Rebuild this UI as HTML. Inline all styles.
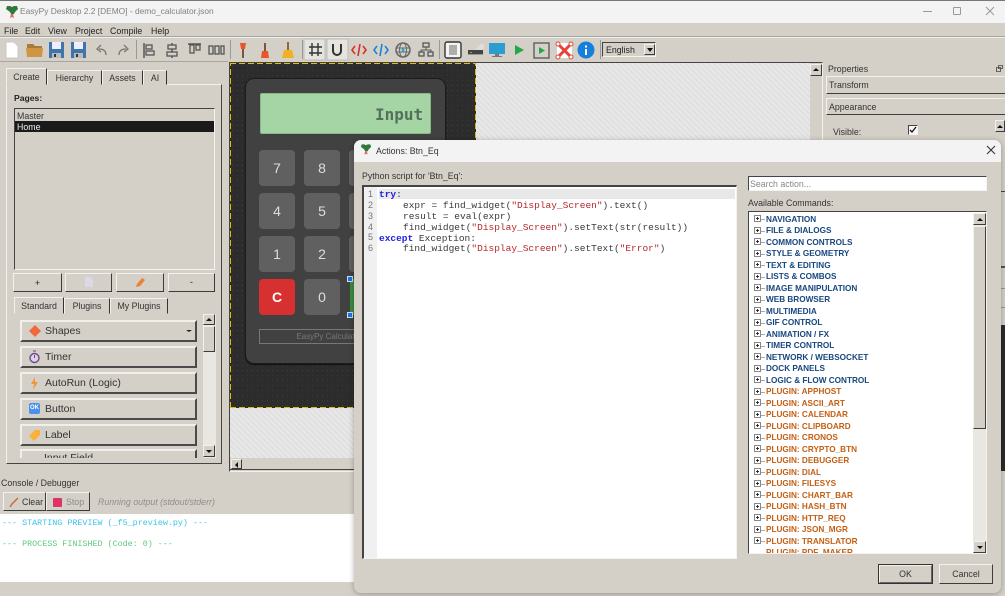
<!DOCTYPE html>
<html><head><meta charset="utf-8"><style>
html,body{margin:0;padding:0;width:1005px;height:596px;overflow:hidden;background:#d4d0c8}
body{position:relative;font-family:"Liberation Sans",sans-serif;font-size:8.8px;color:#222}
div,span.a,svg{position:absolute;box-sizing:border-box}
.t{white-space:nowrap;line-height:12px}
.r{background:#d4d0c8;border:1px solid;border-color:#f2f1ed #3c3c3c #3c3c3c #f2f1ed}
.s{border:1px solid;border-color:#444 #f4f3f0 #f4f3f0 #444}
.wb{background:#d4d0c8;border:2px solid;border-color:#f0efeb #4a4a4a #4a4a4a #f0efeb;font-size:10.5px;color:#333;line-height:19px;padding-left:23px;height:22px;left:20px;width:177px;white-space:nowrap}
.tab{background:#d4d0c8;border:1px solid;border-color:#f2f1ed #333 #d4d0c8 #f2f1ed;text-align:center;color:#333;white-space:nowrap}
.arr{width:0;height:0;border-left:3px solid transparent;border-right:3px solid transparent}
.m{font:9.5px/11px "Liberation Mono",monospace;color:#3a3a3a;white-space:pre;left:379px}
.in{left:403px}
.ln{font:9px/11px "Liberation Sans",sans-serif;color:#777;left:368px}
.kw{color:#1f1fe0;font-weight:bold}.st{color:#b52a2a}
.i{left:766px;font-weight:bold;font-size:8.2px;line-height:11px;white-space:nowrap}
.n{color:#17477f}.p{color:#c45f14}
.pm{left:754px;width:7px;height:7px;border:1px solid #888;background:#fff}
.pm:before{content:"";position:absolute;left:1px;top:2px;width:3px;height:1px;background:#333}
.pm:after{content:"";position:absolute;left:2px;top:1px;width:1px;height:3px;background:#333}
.pl{left:761px;width:4px;height:1px;background:#aaa}
.k{background:#606060;border-radius:4px;width:36px;height:36px;color:#ddd;font-size:14px;line-height:36px;text-align:center}
.dh{height:1px;background:repeating-linear-gradient(90deg,#e2bd10 0,#e2bd10 6px,#2c2c2c 6px,#2c2c2c 9px)}
.dv{width:1px;background:repeating-linear-gradient(0deg,#e2bd10 0,#e2bd10 6px,#2c2c2c 6px,#2c2c2c 9px)}
</style></head><body>

<div style="left:0;top:0;width:1005px;height:23px;background:#f3f3f3;border-top:1px solid #777"></div>
<svg style="left:5px;top:5px" width="14" height="14" viewBox="0 0 14 14"><path d="M2 1h3l2 1 2-1h3l1 3-3 3-1 2H6L5 7 1 4z" fill="#2f7a3a"/><path d="M6 9h2l1 4-2-1-2 1z" fill="#d66"/></svg>
<div class="t" style="left:20px;top:5px;font-size:8.4px;color:#808080">EasyPy Desktop 2.2 [DEMO] - demo_calculator.json</div>
<div style="left:923px;top:11px;width:9px;height:1px;background:#999"></div>
<div style="left:953px;top:7px;width:8px;height:8px;border:1px solid #999;border-radius:1px"></div>
<svg style="left:985px;top:6px" width="10" height="10"><path d="M1 1l8 8M9 1l-8 8" stroke="#999"/></svg>

<div class="t" style="left:4px;top:25px">File</div>
<div class="t" style="left:25px;top:25px">Edit</div>
<div class="t" style="left:48px;top:25px">View</div>
<div class="t" style="left:75px;top:25px">Project</div>
<div class="t" style="left:110px;top:25px">Compile</div>
<div class="t" style="left:151px;top:25px">Help</div>
<div style="left:0;top:36px;width:1005px;height:1px;background:#a9a69f"></div>
<div style="left:0;top:37px;width:1005px;height:1px;background:#eee"></div>
<div style="left:0;top:61px;width:228px;height:1px;background:#a9a69f"></div>

<!-- toolbar -->
<svg style="left:0;top:38px" width="660" height="24" viewBox="0 38 660 24">
<path d="M6 42h8l4 4v12H6z" fill="#fff" stroke="#c8c8c8"/>
<path d="M27 44h6l2 2h7v3H27z" fill="#a87b3c"/><path d="M27 57l-1-9h17l-1 9z" fill="#cf9540"/>
<rect x="49" y="42" width="15" height="16" fill="#3f74ad"/><rect x="52" y="42" width="9" height="7" fill="#eef"/><rect x="52" y="53" width="9" height="5" fill="#bbb"/><rect x="54" y="54" width="2" height="3" fill="#333"/>
<rect x="71" y="42" width="15" height="16" fill="#3f74ad"/><rect x="74" y="42" width="9" height="7" fill="#eef"/><rect x="74" y="53" width="9" height="5" fill="#bbb"/><rect x="76" y="54" width="2" height="3" fill="#333"/>
<path d="M106 55c0-4-2-6-7-6M101 45l-4 4 4 3" fill="none" stroke="#777" stroke-width="1.300"/>
<path d="M119 55c0-4 2-6 7-6M124 45l4 4-4 3" fill="none" stroke="#777" stroke-width="1.300"/>
<rect x="136" y="40" width="1" height="19" fill="#999"/>
<path d="M144 43v15" stroke="#555" stroke-width="1.500"/><rect x="146" y="45" width="6" height="4" fill="none" stroke="#555" stroke-width="1.300"/><rect x="146" y="51" width="8" height="4" fill="none" stroke="#555" stroke-width="1.300"/>
<path d="M172 43v15" stroke="#555" stroke-width="1.500"/><rect x="168" y="45" width="8" height="4" fill="#d4d0c8" stroke="#555" stroke-width="1.300"/><rect x="167" y="52" width="10" height="4" fill="#d4d0c8" stroke="#555" stroke-width="1.300"/>
<path d="M188 44h13" stroke="#555" stroke-width="1.500"/><rect x="190" y="45" width="4" height="8" fill="none" stroke="#555" stroke-width="1.300"/><rect x="196" y="45" width="4" height="5" fill="none" stroke="#555" stroke-width="1.300"/>
<rect x="209" y="46" width="4" height="8" fill="none" stroke="#555" stroke-width="1.300"/><rect x="215" y="46" width="4" height="8" fill="none" stroke="#555" stroke-width="1.300"/><rect x="221" y="46" width="3" height="8" fill="none" stroke="#555" stroke-width="1.300"/>
<rect x="230" y="40" width="1" height="19" fill="#999"/>
<path d="M240 43h6l-1 6h-4z" fill="#e8562a"/><rect x="242" y="49" width="2" height="9" fill="#7a5544"/>
<rect x="264" y="43" width="2" height="8" fill="#7a5544"/><path d="M262 51h6l1 7h-8z" fill="#e8562a"/>
<rect x="287" y="42" width="2" height="8" fill="#8a6a3a"/><path d="M284 50h8l2 8h-12z" fill="#f2b024"/>
<rect x="302" y="40" width="1" height="19" fill="#999"/>
<rect x="304" y="39" width="21" height="21" fill="#e6e4df" stroke="#bbb"/>
<path d="M312 43v13M318 43v13M309 47h13M309 53h13" stroke="#333" stroke-width="1.400"/>
<rect x="327" y="39" width="21" height="21" fill="#e6e4df" stroke="#bbb"/>
<path d="M333 44v7a4 4 0 0 0 8 0v-7" fill="none" stroke="#333" stroke-width="2"/>
<path d="M355 46l-3 4 3 4M363 46l3 4-3 4M360 44l-2 12" fill="none" stroke="#d9302c" stroke-width="1.600"/>
<path d="M377 46l-3 4 3 4M385 46l3 4-3 4M382 44l-2 12" fill="none" stroke="#1a84d8" stroke-width="1.600"/>
<circle cx="403" cy="50" r="7" fill="none" stroke="#666" stroke-width="1.500"/><ellipse cx="403" cy="50" rx="3.500" ry="7" fill="none" stroke="#666"/><path d="M396 48h14M396 52h14" stroke="#666"/><circle cx="403" cy="50" r="1.500" fill="#19b5d8"/>
<rect x="423" y="43" width="6" height="4" fill="none" stroke="#555" stroke-width="1.300"/><rect x="419" y="52" width="5" height="4" fill="none" stroke="#555" stroke-width="1.300"/><rect x="428" y="52" width="5" height="4" fill="none" stroke="#555" stroke-width="1.300"/><path d="M426 47v3M421 52v-2h10v2" fill="none" stroke="#555"/>
<rect x="439" y="40" width="1" height="19" fill="#999"/>
<rect x="445" y="42" width="16" height="16" rx="2" fill="#f4f4f2" stroke="#333" stroke-width="1.400"/><path d="M449 46h8M449 48h8M449 50h8M449 52h8M449 54h8" stroke="#666"/>
<path d="M468 50h15v4h-15z" fill="#444"/><rect x="468" y="54" width="15" height="1" fill="#999"/><path d="M475 50l6-6h3v4l-2 2z" fill="#ddd"/><rect x="470" y="52" width="2" height="1" fill="#5c5"/>
<rect x="489" y="43" width="16" height="11" fill="#2a9ed0"/><rect x="495" y="54" width="4" height="2" fill="#777"/><rect x="492" y="56" width="10" height="1" fill="#777"/>
<path d="M515 45l9 5-9 5z" fill="#21a84a"/>
<rect x="534" y="43" width="15" height="15" fill="none" stroke="#555" stroke-width="1.300"/><path d="M539 47l6 3.500-6 3.500z" fill="#21a84a"/>
<rect x="557" y="43" width="15" height="15" fill="#fff"/><path d="M558 44l13 13M571 44l-13 13" stroke="#e5423a" stroke-width="3"/><circle cx="558" cy="44" r="2" fill="#fff" stroke="#e5423a"/><circle cx="571" cy="44" r="2" fill="#fff" stroke="#e5423a"/><circle cx="558" cy="57" r="2" fill="#fff" stroke="#e5423a"/><circle cx="571" cy="57" r="2" fill="#fff" stroke="#e5423a"/>
<circle cx="586" cy="50" r="8.500" fill="#1580dc"/><rect x="585" y="49" width="2" height="6" fill="#fff"/><rect x="585" y="45.500" width="2" height="2" fill="#fff"/>
<rect x="600" y="40" width="1" height="19" fill="#999"/>
</svg>
<div class="s" style="left:602px;top:42px;width:54px;height:15px;background:#d4d0c8;padding:2px 0 0 3px;line-height:11px;border-width:1px">English</div>
<div class="r" style="left:644px;top:44px;width:11px;height:11px"><div class="arr" style="left:2px;top:3px;border-top:4px solid #111"></div></div>

<!-- left panel tabs -->
<div class="t" style="left:6px;top:84px;width:216px;height:380px;border:1px solid;border-color:#f2f1ed #444 #444 #f2f1ed"></div>
<div class="tab" style="left:47px;top:70px;width:55px;height:15px;line-height:15px">Hierarchy</div>
<div class="tab" style="left:102px;top:70px;width:41px;height:15px;line-height:15px">Assets</div>
<div class="tab" style="left:143px;top:70px;width:24px;height:15px;line-height:15px">AI</div>
<div class="tab" style="left:6px;top:68px;width:41px;height:17px;line-height:17px">Create</div>
<div class="t" style="left:14px;top:92px;font-weight:bold;font-size:8.6px">Pages:</div>
<div class="s" style="left:14px;top:108px;width:201px;height:162px;background:#d4d0c8"><div style="left:0;top:0;width:199px;height:160px;background:#d4d0c8"></div></div>
<div class="t" style="left:17px;top:110px;color:#333">Master</div>
<div style="left:15px;top:121px;width:199px;height:11px;background:#1a1a1a"></div>
<div class="t" style="left:17px;top:121px;color:#eee;line-height:13px">Home</div>

<div class="r" style="left:13px;top:273px;width:49px;height:19px;border-width:1px;text-align:center;line-height:18px">+</div>
<div class="r" style="left:65px;top:273px;width:47px;height:19px"></div>
<svg style="left:85px;top:277px" width="8" height="10"><path d="M0 0h5l3 3v7H0z" fill="#dcd8e8"/></svg>
<div class="r" style="left:116px;top:273px;width:48px;height:19px"></div>
<svg style="left:135px;top:277px" width="11" height="11"><path d="M1 10l1-3 5-6 3 2-5 6z" fill="#ee7d35"/></svg>
<div class="r" style="left:168px;top:273px;width:47px;height:19px;text-align:center;line-height:16px">-</div>

<div class="tab" style="left:64px;top:298px;width:46px;height:16px;line-height:15px">Plugins</div>
<div class="tab" style="left:110px;top:298px;width:58px;height:16px;line-height:15px">My Plugins</div>
<div class="tab" style="left:14px;top:297px;width:50px;height:17px;line-height:16px">Standard</div>

<div class="wb" style="top:320px">Shapes</div>
<div class="arr" style="left:186px;top:330px;border-top:2px solid #222"></div>
<svg style="left:28px;top:325px" width="14" height="12"><path d="M7 0l6 6-6 6-6-6z" fill="#f0683c"/></svg>
<div class="wb" style="top:346px">Timer</div>
<svg style="left:28px;top:350px" width="13" height="14"><circle cx="6.500" cy="8" r="4.500" fill="#e0d0ee" stroke="#6a4e80" stroke-width="1.400"/><path d="M5 1h3M6.500 8V5" stroke="#6a4e80"/></svg>
<div class="wb" style="top:372px">AutoRun (Logic)</div>
<svg style="left:30px;top:377px" width="9" height="13"><path d="M5 0L1 7h3l-1 6 5-8H5z" fill="#f5943a"/></svg>
<div class="wb" style="top:398px">Button</div>
<div style="left:29px;top:403px;width:11px;height:11px;background:#4a90ec;border-radius:2px;color:#fff;font-size:6px;font-weight:bold;line-height:11px;text-align:center">OK</div>
<div class="wb" style="top:424px">Label</div>
<svg style="left:29px;top:429px" width="12" height="12"><path d="M0 7l6-6h5v5l-6 6z" fill="#f9b13a"/></svg>
<div style="left:20px;top:449px;width:177px;height:9px;border:solid;border-width:2px 2px 0 2px;border-color:#f0efeb #4a4a4a #4a4a4a #f0efeb;overflow:hidden"></div>
<div class="t" style="left:44px;top:452px;height:6px;overflow:hidden;font-size:10.5px;color:#333;line-height:12px">Input Field</div>

<div style="left:203px;top:314px;width:13px;height:144px;background:#e8e7e2"></div>
<div class="r" style="left:203px;top:314px;width:12px;height:11px"><div class="arr" style="left:2px;top:3px;border-bottom:3px solid #111"></div></div>
<div class="r" style="left:203px;top:326px;width:12px;height:26px"></div>
<div class="r" style="left:203px;top:445px;width:12px;height:12px"><div class="arr" style="left:2px;top:4px;border-top:3px solid #111"></div></div>

<!-- canvas -->
<div style="left:229px;top:62px;width:594px;height:410px;border:1px solid;border-color:#444 #f2f1ed #f2f1ed #444;background:#d4d0c8"></div>
<div style="left:230px;top:63px;width:580px;height:395px;background:repeating-linear-gradient(45deg,#e0e0e0 0,#e0e0e0 2px,#e8e8e8 2px,#e8e8e8 4px)"></div>
<div style="left:230px;top:63px;width:246px;height:345px;background-color:#2c2c2c;background-image:radial-gradient(#3d3d3d 0.6px,transparent 0.7px);background-size:5px 5px"></div>
<div class="dh" style="left:230px;top:63px;width:246px"></div>
<div class="dh" style="left:230px;top:407px;width:246px"></div>
<div class="dv" style="left:230px;top:63px;height:345px"></div>
<div class="dv" style="left:475px;top:63px;height:345px"></div>
<div style="left:245px;top:78px;width:201px;height:286px;background:#414141;border-radius:9px;border:1px solid #1c1c1c;box-shadow:0 1px 1px #111"></div>
<div style="left:260px;top:93px;width:171px;height:41px;background:#a5d5a5;border:1px solid #88b888;border-radius:2px"></div>
<div class="t" style="left:375px;top:106px;font:bold 16px/18px 'DejaVu Sans Mono','Liberation Mono',monospace;color:#55705a">Input</div>
<div class="k" style="left:259px;top:150px">7</div><div class="k" style="left:304px;top:150px">8</div><div class="k" style="left:349px;top:150px"></div>
<div class="k" style="left:259px;top:193px">4</div><div class="k" style="left:304px;top:193px">5</div><div class="k" style="left:349px;top:193px"></div>
<div class="k" style="left:259px;top:236px">1</div><div class="k" style="left:304px;top:236px">2</div><div class="k" style="left:349px;top:236px"></div>
<div class="k" style="left:259px;top:279px;background:#d63030;color:#fff;font-weight:bold">C</div><div class="k" style="left:304px;top:279px">0</div>
<div style="left:350px;top:279px;width:10px;height:36px;background:#3f8a3f"></div>
<div style="left:347px;top:276px;width:6px;height:6px;background:#1a73e8;border:1px solid #cde"></div>
<div style="left:347px;top:312px;width:6px;height:6px;background:#1a73e8;border:1px solid #cde"></div>
<div style="left:259px;top:329px;width:140px;height:15px;border:1px solid #777;color:#777;font-size:8px;line-height:13px;text-align:center">EasyPy Calculator</div>

<div style="left:230px;top:458px;width:593px;height:12px;background:#d4d0c8;border-bottom:1px solid #444"></div>
<div class="r" style="left:231px;top:459px;width:11px;height:10px"><div class="arr" style="left:3px;top:2px;border:3px solid transparent;border-right:3px solid #111;border-left:0"></div></div>
<div style="left:810px;top:63px;width:12px;height:395px;background:#d4d0c8"></div>
<div class="r" style="left:810px;top:64px;width:12px;height:12px"><div class="arr" style="left:2px;top:3px;border-bottom:3px solid #111"></div></div>

<!-- properties -->
<div class="t" style="left:828px;top:63px;color:#333">Properties</div>
<svg style="left:996px;top:65px" width="7" height="7"><path d="M2.500 .5h4v3h-4zM.5 2.500h4v4h-4z" fill="#d4d0c8" stroke="#444" stroke-width=".8"/></svg>
<div class="r" style="left:826px;top:76px;width:179px;height:18px;padding-left:2px;line-height:17px;border-right:0;color:#333">Transform</div>
<div class="r" style="left:826px;top:98px;width:179px;height:17px;padding-left:2px;line-height:17px;border-right:0;color:#333">Appearance</div>
<div class="t" style="left:833px;top:126px;color:#333">Visible:</div>
<div class="s" style="left:908px;top:125px;width:10px;height:10px;background:#f8f8f8"></div>
<svg style="left:909px;top:126px" width="8" height="8"><path d="M1 4l2 2 4-5" fill="none" stroke="#111" stroke-width="1.300"/></svg>
<div class="r" style="left:995px;top:120px;width:10px;height:12px"><div class="arr" style="left:1px;top:4px;border-bottom:3px solid #111"></div></div>

<!-- right strip behind dialog -->
<div style="left:1001px;top:140px;width:4px;height:456px;background:#d4d0c8"></div>
<div style="left:1001px;top:191px;width:4px;height:1px;background:#444"></div>
<div style="left:1001px;top:266px;width:4px;height:2px;background:#555"></div>
<div style="left:1001px;top:288px;width:4px;height:1px;background:#999"></div>
<div style="left:1001px;top:307px;width:4px;height:1px;background:#999"></div>
<div style="left:1001px;top:325px;width:4px;height:146px;background:#2a2a2a"></div>

<!-- console -->
<div class="t" style="left:1px;top:477px;color:#333">Console / Debugger</div>
<div class="r" style="left:3px;top:492px;width:43px;height:19px;padding-left:18px;line-height:18px;color:#333">Clear</div>
<svg style="left:9px;top:497px" width="11" height="11"><path d="M1 10l2-3 6-6" fill="none" stroke="#c86a35" stroke-width="1.400"/></svg>
<div class="r" style="left:46px;top:492px;width:44px;height:19px;padding-left:19px;line-height:18px;color:#8a8a8a">Stop</div>
<div style="left:53px;top:498px;width:9px;height:9px;background:#dd3366;border-radius:1px"></div>
<div class="t" style="left:98px;top:496px;font-style:italic;color:#8e8e8e;font-size:8.8px">Running output (stdout/stderr)</div>
<div style="left:0;top:514px;width:360px;height:68px;background:#fff"></div>
<div class="t" style="left:2px;top:517px;font:8.4px/12px 'Liberation Mono',monospace;color:#3cc4e8">--- STARTING PREVIEW (_f5_preview.py) ---</div>
<div class="t" style="left:2px;top:538px;font:8.4px/12px 'Liberation Mono',monospace;color:#62c97e">--- PROCESS FINISHED (Code: 0) ---</div>

<!-- dialog -->
<div style="left:354px;top:140px;width:647px;height:453px;background:#d4d0c8;border-radius:7px;box-shadow:0 1px 6px rgba(0,0,0,.3);overflow:hidden">
<div style="left:0;top:0;width:647px;height:22px;background:#f3f3f3"></div>
</div>
<svg style="left:360px;top:143px" width="12" height="13" viewBox="0 0 14 14"><path d="M2 1h3l2 1 2-1h3l1 3-3 3-1 2H6L5 7 1 4z" fill="#2f7a3a"/><path d="M6 9h2l1 4-2-1-2 1z" fill="#d66"/></svg>
<div class="t" style="left:376px;top:145px;color:#333">Actions: Btn_Eq</div>
<svg style="left:986px;top:145px" width="10" height="10"><path d="M1 1l8 8M9 1l-8 8" stroke="#333" stroke-width="1.100"/></svg>
<div class="t" style="left:362px;top:170px;color:#333">Python script for 'Btn_Eq':</div>

<div class="s" style="left:362px;top:185px;width:375px;height:374px;background:#fff;border-width:2px 1px 1px 2px"></div>
<div style="left:364px;top:187px;width:13px;height:371px;background:#f0f0f0"></div>
<div style="left:379px;top:189px;width:356px;height:10px;background:#e8e8e8"></div>
<div class="ln" style="top:189px">1</div><div class="ln" style="top:200px">2</div><div class="ln" style="top:211px">3</div><div class="ln" style="top:222px">4</div><div class="ln" style="top:232px">5</div><div class="ln" style="top:243px">6</div>
<div class="m" style="top:189px"><span class="kw">try</span>:</div>
<div class="m in" style="top:200px">expr = find_widget(<span class="st">"Display_Screen"</span>).text()</div>
<div class="m in" style="top:211px">result = eval(expr)</div>
<div class="m in" style="top:222px">find_widget(<span class="st">"Display_Screen"</span>).setText(str(result))</div>
<div class="m" style="top:233px"><span class="kw">except</span> Exception:</div>
<div class="m in" style="top:243px">find_widget(<span class="st">"Display_Screen"</span>).setText(<span class="st">"Error"</span>)</div>

<div class="s" style="left:748px;top:176px;width:239px;height:15px;background:#fff;color:#888;line-height:14px;padding-left:1px">Search action...</div>
<div class="t" style="left:748px;top:197px;color:#333">Available Commands:</div>
<div class="s" style="left:748px;top:211px;width:239px;height:343px;background:#fff;overflow:hidden">
</div>

<div class="pm" style="top:215px"></div><div class="pl" style="top:219px"></div><div class="i n" style="top:214px">NAVIGATION</div>
<div class="pm" style="top:227px"></div><div class="pl" style="top:231px"></div><div class="i n" style="top:225px">FILE &amp; DIALOGS</div>
<div class="pm" style="top:238px"></div><div class="pl" style="top:242px"></div><div class="i n" style="top:237px">COMMON CONTROLS</div>
<div class="pm" style="top:250px"></div><div class="pl" style="top:254px"></div><div class="i n" style="top:248px">STYLE &amp; GEOMETRY</div>
<div class="pm" style="top:261px"></div><div class="pl" style="top:265px"></div><div class="i n" style="top:260px">TEXT &amp; EDITING</div>
<div class="pm" style="top:273px"></div><div class="pl" style="top:277px"></div><div class="i n" style="top:271px">LISTS &amp; COMBOS</div>
<div class="pm" style="top:284px"></div><div class="pl" style="top:288px"></div><div class="i n" style="top:283px">IMAGE MANIPULATION</div>
<div class="pm" style="top:296px"></div><div class="pl" style="top:300px"></div><div class="i n" style="top:294px">WEB BROWSER</div>
<div class="pm" style="top:307px"></div><div class="pl" style="top:311px"></div><div class="i n" style="top:306px">MULTIMEDIA</div>
<div class="pm" style="top:319px"></div><div class="pl" style="top:323px"></div><div class="i n" style="top:317px">GIF CONTROL</div>
<div class="pm" style="top:330px"></div><div class="pl" style="top:334px"></div><div class="i n" style="top:329px">ANIMATION / FX</div>
<div class="pm" style="top:342px"></div><div class="pl" style="top:346px"></div><div class="i n" style="top:340px">TIMER CONTROL</div>
<div class="pm" style="top:353px"></div><div class="pl" style="top:357px"></div><div class="i n" style="top:352px">NETWORK / WEBSOCKET</div>
<div class="pm" style="top:365px"></div><div class="pl" style="top:369px"></div><div class="i n" style="top:363px">DOCK PANELS</div>
<div class="pm" style="top:376px"></div><div class="pl" style="top:380px"></div><div class="i n" style="top:375px">LOGIC &amp; FLOW CONTROL</div>
<div class="pm" style="top:388px"></div><div class="pl" style="top:392px"></div><div class="i p" style="top:386px">PLUGIN: APPHOST</div>
<div class="pm" style="top:399px"></div><div class="pl" style="top:403px"></div><div class="i p" style="top:398px">PLUGIN: ASCII_ART</div>
<div class="pm" style="top:411px"></div><div class="pl" style="top:415px"></div><div class="i p" style="top:409px">PLUGIN: CALENDAR</div>
<div class="pm" style="top:422px"></div><div class="pl" style="top:426px"></div><div class="i p" style="top:421px">PLUGIN: CLIPBOARD</div>
<div class="pm" style="top:434px"></div><div class="pl" style="top:438px"></div><div class="i p" style="top:432px">PLUGIN: CRONOS</div>
<div class="pm" style="top:445px"></div><div class="pl" style="top:449px"></div><div class="i p" style="top:444px">PLUGIN: CRYPTO_BTN</div>
<div class="pm" style="top:457px"></div><div class="pl" style="top:461px"></div><div class="i p" style="top:455px">PLUGIN: DEBUGGER</div>
<div class="pm" style="top:468px"></div><div class="pl" style="top:472px"></div><div class="i p" style="top:467px">PLUGIN: DIAL</div>
<div class="pm" style="top:480px"></div><div class="pl" style="top:484px"></div><div class="i p" style="top:478px">PLUGIN: FILESYS</div>
<div class="pm" style="top:491px"></div><div class="pl" style="top:495px"></div><div class="i p" style="top:490px">PLUGIN: CHART_BAR</div>
<div class="pm" style="top:503px"></div><div class="pl" style="top:507px"></div><div class="i p" style="top:501px">PLUGIN: HASH_BTN</div>
<div class="pm" style="top:514px"></div><div class="pl" style="top:518px"></div><div class="i p" style="top:513px">PLUGIN: HTTP_REQ</div>
<div class="pm" style="top:526px"></div><div class="pl" style="top:530px"></div><div class="i p" style="top:524px">PLUGIN: JSON_MGR</div>
<div class="pm" style="top:537px"></div><div class="pl" style="top:541px"></div><div class="i p" style="top:536px">PLUGIN: TRANSLATOR</div>
<div style="left:750px;top:547px;width:220px;height:6px;overflow:hidden"><div class="i p" style="left:16px;top:0">PLUGIN: PDF_MAKER</div></div>

<div style="left:973px;top:213px;width:13px;height:340px;background:#e8e7e2"></div>
<div class="r" style="left:973px;top:213px;width:13px;height:12px"><div class="arr" style="left:3px;top:4px;border-bottom:3px solid #111"></div></div>
<div class="r" style="left:973px;top:226px;width:13px;height:203px"></div>
<div class="r" style="left:973px;top:541px;width:13px;height:12px"><div class="arr" style="left:3px;top:4px;border-top:3px solid #111"></div></div>

<div style="left:878px;top:564px;width:55px;height:20px;border:1px solid #333;text-align:center;line-height:18px;color:#333"><div style="left:0;top:0;width:53px;height:18px;border:1px solid;border-color:#f2f1ed #666 #666 #f2f1ed"></div>OK</div>
<div class="r" style="left:939px;top:564px;width:54px;height:20px;text-align:center;line-height:18px;color:#333">Cancel</div>
</body></html>
